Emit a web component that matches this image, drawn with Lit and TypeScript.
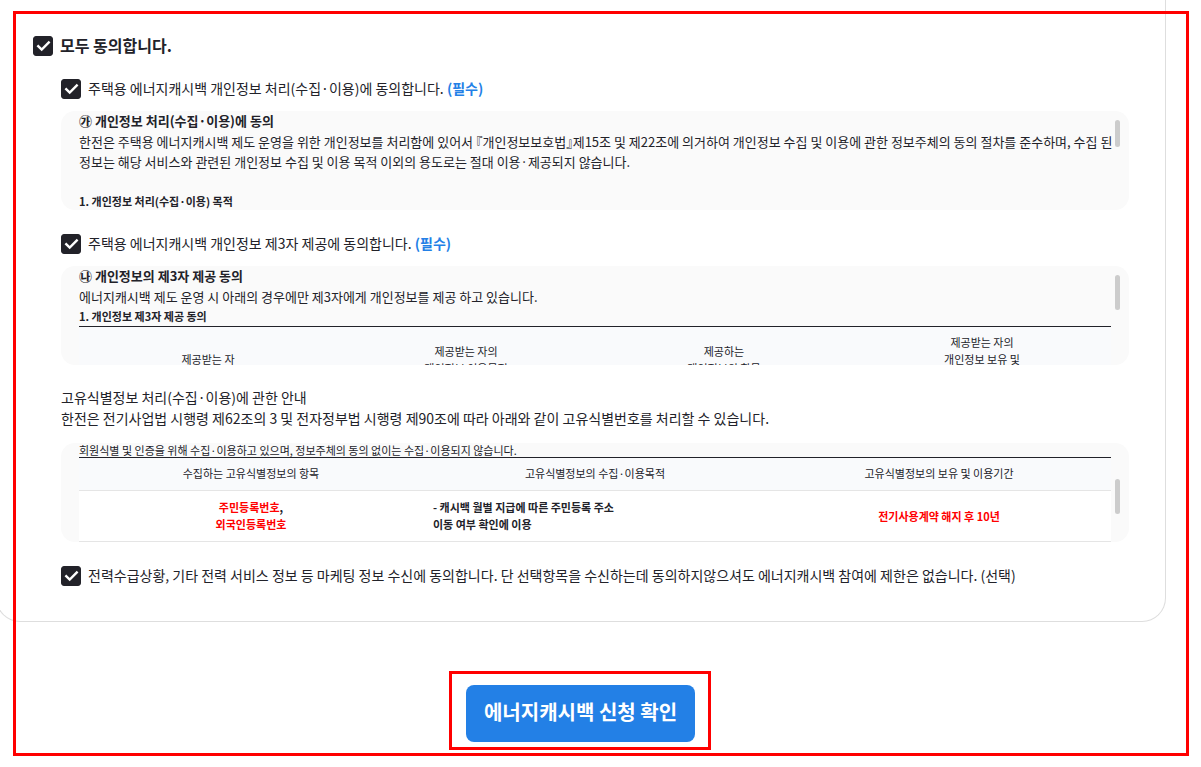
import { LitElement, html, css } from "lit";
import { customElement, property } from "lit/decorators.js";

@customElement("agree-check")
export class AgreeCheck extends LitElement {
  @property() label = "";
  @property() note = "";
  @property({ type: Boolean }) strong = false;

  static styles = css`
    :host {
      display: block;
    }
    .row {
      display: flex;
      align-items: flex-start;
      gap: 7px;
      font-size: 14px;
      line-height: 18px;
      cursor: pointer;
    }
    .row.strong {
      font-size: 16px;
      font-weight: 700;
    }
    .tick {
      display: grid;
      flex: none;
      width: 20px;
      height: 20px;
    }
    .box,
    .mark {
      grid-area: 1 / 1;
      width: 20px;
      height: 20px;
      margin: 0;
    }
    .box {
      appearance: none;
      border: 1px solid #222229;
      border-radius: 3px;
      background: #fff;
    }
    .box:checked {
      background: #222229;
    }
    .mark {
      pointer-events: none;
      fill: none;
      stroke: #fff;
      stroke-width: 2.4;
    }
    .note {
      color: #2380e6;
      font-weight: 700;
    }
  `;

  render() {
    return html`
      <label class="row ${this.strong ? "strong" : ""}">
        <span class="tick">
          <input class="box" type="checkbox" checked />
          <svg class="mark" viewBox="0 0 20 20" aria-hidden="true">
            <path d="M4.4 9.4 L8.7 13.6 L16.6 5.7" />
          </svg>
        </span>
        <span>${this.label}${this.note ? html` <b class="note">${this.note}</b>` : ""}</span>
      </label>
    `;
  }
}

@customElement("app-root")
export class AppRoot extends LitElement {
  static styles = css`
    :host {
      display: block;
      position: relative;
      overflow: hidden;
      background: #fff;
      color: #222229;
      font-family: "Noto Sans CJK KR", "Noto Sans", sans-serif;
      word-break: keep-all;
    }
    p,
    h2,
    h3 {
      margin: 0;
      font-size: inherit;
    }
    .frame {
      position: absolute;
      inset: 11px 12px 11px 13px;
      border: 3px solid #f00;
      pointer-events: none;
    }
    .card {
      margin: 0 35px 0 -4px;
      padding: 36px 36px 35px;
      border: 1px solid #dedede;
      border-top: 0;
      border-radius: 0 0 24px 24px;
    }
    .list {
      display: flex;
      flex-direction: column;
      gap: 24px;
      padding: 23px 0 0 28px;
    }
    .item {
      display: flex;
      flex-direction: column;
      gap: 12px;
    }
    .intro {
      display: flex;
      flex-direction: column;
      gap: 4px;
      padding-bottom: 4px;
      font-size: 14px;
      line-height: 17px;
    }
    .terms {
      position: relative;
      height: 99px;
      box-sizing: border-box;
      padding: 0 18px;
      overflow: hidden;
      border-radius: 14px;
      background: #fafafa;
      font-size: 13px;
      line-height: 20px;
    }
    .terms.end {
      display: flex;
      flex-direction: column;
      justify-content: flex-end;
    }
    .law {
      white-space: nowrap;
      font-feature-settings: "halt";
    }
    .thumb {
      position: absolute;
      top: 9px;
      right: 9px;
      width: 5px;
      height: 27px;
      border-radius: 3px;
      background: #ccc;
    }
    .thumb.long {
      height: 35px;
    }
    .thumb.low {
      top: 36px;
    }
    .head {
      margin-bottom: 2px;
      line-height: 19px;
      font-weight: 700;
    }
    .sub {
      font-size: 11px;
      line-height: 19px;
      font-weight: 700;
    }
    .gap {
      margin-top: 20px;
    }
    .small {
      font-size: 11px;
      line-height: 14px;
    }
    .grid {
      width: 100%;
      border-collapse: separate;
      border-spacing: 0;
      table-layout: fixed;
      border-top: 1px solid #222229;
      font-size: 11px;
      line-height: 17px;
    }
    .grid th {
      padding: 7px 10px 8px;
      background: #f9fafc;
      font-weight: 400;
    }
    .grid th,
    .grid td {
      border-bottom: 1px solid #e5e5e5;
    }
    .grid td {
      padding: 8px 10px;
      background: #fff;
      text-align: center;
      font-weight: 700;
    }
    .grid .left {
      text-align: left;
    }
    .red {
      color: #f00;
    }
    .actions {
      display: flex;
      justify-content: center;
      margin: 49px 41px 17px 0;
    }
    .focus {
      padding: 11px 13px 5px 14px;
      border: 3px solid #f00;
    }
    .submit {
      display: block;
      padding: 12px 18px 16px;
      border: 0;
      border-radius: 8px;
      background: #2380e6;
      color: #fff;
      font: 700 20px/29px "Noto Sans CJK KR", "Noto Sans", sans-serif;
      cursor: pointer;
    }
  `;

  render() {
    return html`
      <main class="card">
        <agree-check strong label="모두 동의합니다."></agree-check>
        <div class="list">
          <section class="item">
            <agree-check
              label="주택용 에너지캐시백 개인정보 처리(수집·이용)에 동의합니다."
              note="(필수)"
            ></agree-check>
            <div class="terms" tabindex="0">
              <h2 class="head">㉮ 개인정보 처리(수집·이용)에 동의</h2>
              <p class="law">
                한전은 주택용 에너지캐시백 제도 운영을 위한 개인정보를 처리함에 있어서 『개인정보보호법』제15조 및 제22조에 의거하여 개인정보 수집 및 이용에 관한 정보주체의 동의 절차를 준수하며, 수집 된<br />
                정보는 해당 서비스와 관련된 개인정보 수집 및 이용 목적 이외의 용도로는 절대 이용·제공되지 않습니다.
              </p>
              <h3 class="sub gap">1. 개인정보 처리(수집·이용) 목적</h3>
              <span class="thumb"></span>
            </div>
          </section>
          <section class="item">
            <agree-check
              label="주택용 에너지캐시백 개인정보 제3자 제공에 동의합니다."
              note="(필수)"
            ></agree-check>
            <div class="terms" tabindex="0">
              <h2 class="head">㉯ 개인정보의 제3자 제공 동의</h2>
              <p>에너지캐시백 제도 운영 시 아래의 경우에만 제3자에게 개인정보를 제공 하고 있습니다.</p>
              <h3 class="sub">1. 개인정보 제3자 제공 동의</h3>
              <table class="grid">
                <thead>
                  <tr>
                    <th>제공받는 자</th>
                    <th>제공받는 자의<br />개인정보 이용목적</th>
                    <th>제공하는<br />개인정보의 항목</th>
                    <th>제공받는 자의<br />개인정보 보유 및<br />이용기간</th>
                  </tr>
                </thead>
              </table>
              <span class="thumb long"></span>
            </div>
          </section>
          <section class="item">
            <div class="intro">
              <p>고유식별정보 처리(수집·이용)에 관한 안내</p>
              <p>한전은 전기사업법 시행령 제62조의 3 및 전자정부법 시행령 제90조에 따라 아래와 같이 고유식별번호를 처리할 수 있습니다.</p>
            </div>
            <div class="terms end" tabindex="0">
              <p class="small">회원식별 및 인증을 위해 수집·이용하고 있으며, 정보주체의 동의 없이는 수집·이용되지 않습니다.</p>
              <table class="grid">
                <thead>
                  <tr>
                    <th>수집하는 고유식별정보의 항목</th>
                    <th>고유식별정보의 수집·이용목적</th>
                    <th>고유식별정보의 보유 및 이용기간</th>
                  </tr>
                </thead>
                <tbody>
                  <tr>
                    <td><span class="red">주민등록번호</span>,<br /><span class="red">외국인등록번호</span></td>
                    <td class="left">- 캐시백 월별 지급에 따른 주민등록 주소<br />이동 여부 확인에 이용</td>
                    <td class="red">전기사용계약 해지 후 10년</td>
                  </tr>
                </tbody>
              </table>
              <span class="thumb long low"></span>
            </div>
          </section>
          <agree-check
            label="전력수급상황, 기타 전력 서비스 정보 등 마케팅 정보 수신에 동의합니다. 단 선택항목을 수신하는데 동의하지않으셔도 에너지캐시백 참여에 제한은 없습니다. (선택)"
          ></agree-check>
        </div>
      </main>
      <div class="actions">
        <div class="focus">
          <button class="submit" type="button">에너지캐시백 신청 확인</button>
        </div>
      </div>
      <div class="frame"></div>
    `;
  }
}
